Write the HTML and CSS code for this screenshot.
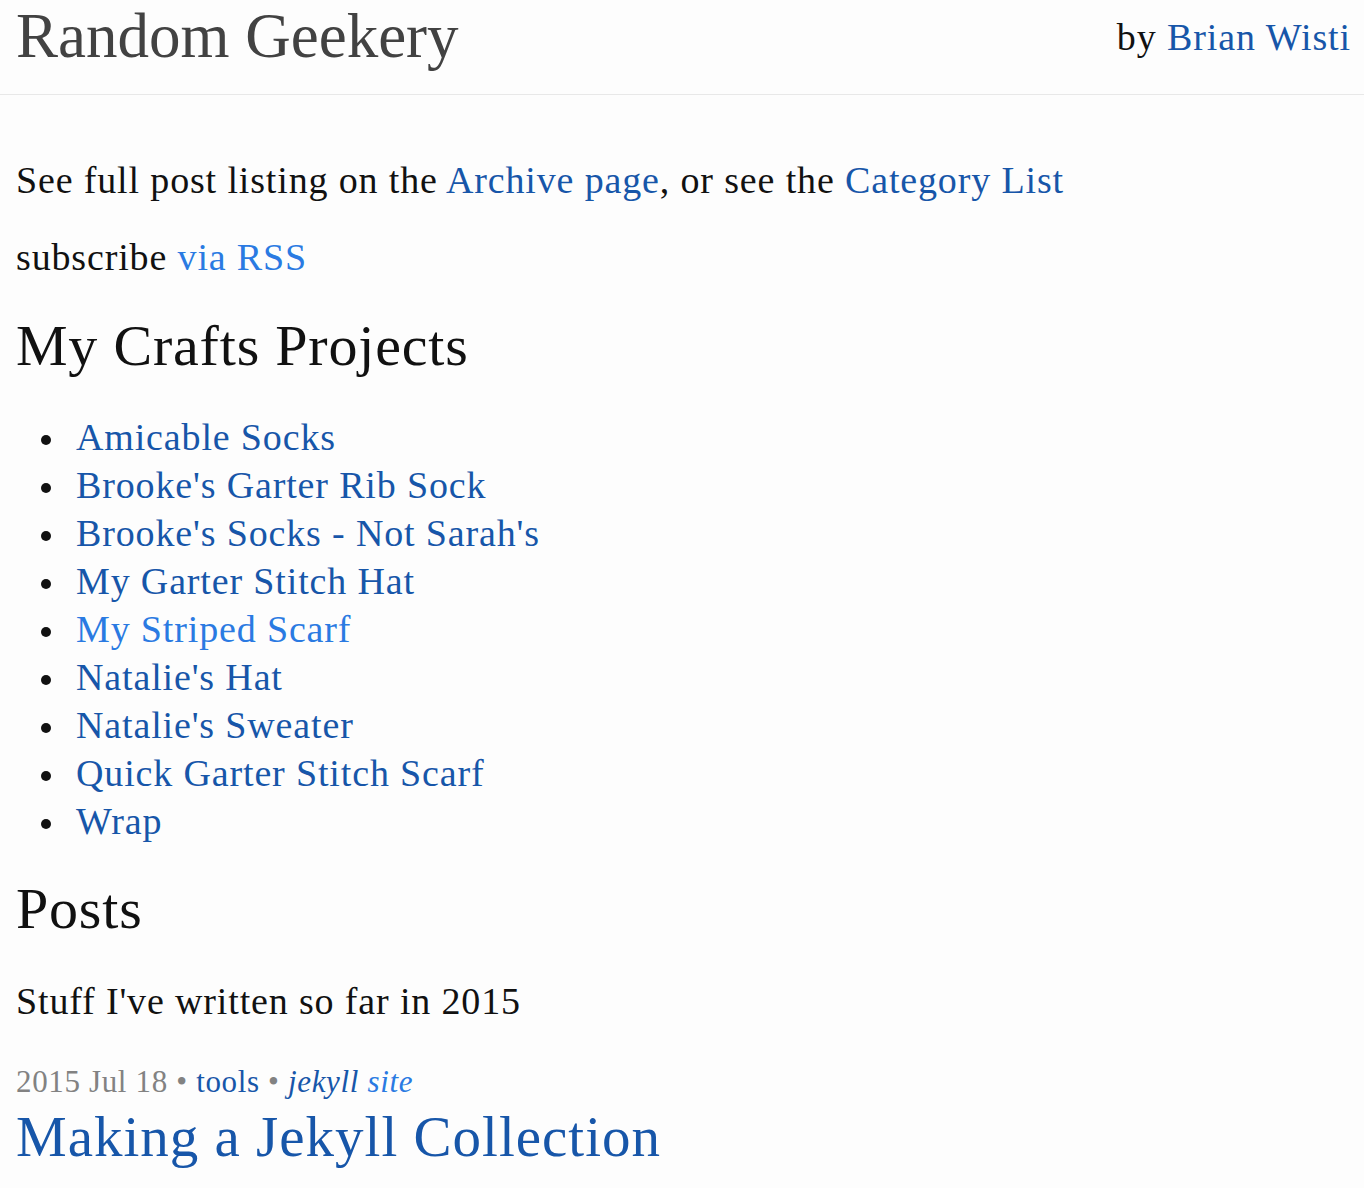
FILE: index.html
```html
<!DOCTYPE html>
<html lang="en">
<head>
<meta charset="utf-8">
<title>Random Geekery</title>
<link rel="stylesheet" href="styles.css">
</head>
<body>
<header class="site-header">
  <div class="header-inner">
    <a class="site-title" href="#">Random Geekery</a>
    <div class="byline">by <a class="link" href="#">Brian Wisti</a></div>
  </div>
</header>
<main class="page-content">
  <p class="intro">See full post listing on the <a class="link" href="#">Archive page</a>, or see the <a class="link" href="#">Category List</a></p>
  <p class="subscribe">subscribe <a class="link-light" href="#">via RSS</a></p>
  <h2 class="section-title crafts">My Crafts Projects</h2>
  <ul class="project-list">
    <li><a class="link" href="#">Amicable Socks</a></li>
    <li><a class="link" href="#">Brooke's Garter Rib Sock</a></li>
    <li><a class="link" href="#">Brooke's Socks - Not Sarah's</a></li>
    <li><a class="link" href="#">My Garter Stitch Hat</a></li>
    <li><a class="link-light" href="#">My Striped Scarf</a></li>
    <li><a class="link" href="#">Natalie's Hat</a></li>
    <li><a class="link" href="#">Natalie's Sweater</a></li>
    <li><a class="link" href="#">Quick Garter Stitch Scarf</a></li>
    <li><a class="link" href="#">Wrap</a></li>
  </ul>
  <h2 class="section-title posts">Posts</h2>
  <p class="posts-intro">Stuff I've written so far in 2015</p>
  <div class="post-meta">2015 Jul 18 • <a class="link" href="#">tools</a> • <em class="tags"><a class="link" href="#">jekyll</a> <a class="link-light" href="#">site</a></em></div>
  <h3 class="post-title"><a class="link" href="#">Making a Jekyll Collection</a></h3>
</main>
</body>
</html>
```
FILE: styles.css
```css
html, body {
  margin: 0;
  padding: 0;
  background: #fdfdfd;
}
body {
  font-family: "Liberation Serif", "Times New Roman", serif;
  color: #111111;
  font-size: 38px;
  line-height: 48px;
  letter-spacing: 0.85px;
}
a {
  text-decoration: none;
}
.link {
  color: #1756a9;
}
.link-light {
  color: #2a7ae2;
}
.site-header {
  border-bottom: 1px solid #e8e8e8;
}
.header-inner {
  display: flex;
  justify-content: space-between;
  align-items: flex-start;
  height: 88px;
  padding: 6px 13px 0 16px;
}
.site-title {
  font-size: 63px;
  line-height: 60px;
  letter-spacing: 0;
  color: #424242;
}
.byline {
  font-size: 38px;
  line-height: 62px;
  letter-spacing: 0.9px;
}
.page-content {
  padding: 61px 16px 0;
}
p {
  margin: 0;
}
.subscribe {
  margin-top: 29px;
}
.section-title {
  font-weight: normal;
  font-size: 58px;
  line-height: 68px;
  letter-spacing: 0.8px;
  margin: 0;
}
.crafts {
  margin-top: 31px;
}
.project-list {
  list-style: none;
  margin: 33px 0 0;
  padding-left: 60px;
}
.project-list li::before {
  content: "";
  display: inline-block;
  width: 10px;
  height: 10px;
  border-radius: 50%;
  background: #111111;
  margin-left: -35px;
  margin-right: 25px;
  vertical-align: 5px;
}
.posts {
  margin-top: 30px;
}
.posts-intro {
  margin-top: 34px;
}
.post-meta {
  margin-top: 37px;
  font-size: 31px;
  line-height: 40px;
  letter-spacing: 0.65px;
  color: #828282;
}
.tags {
  font-style: italic;
}
.post-title {
  margin: 3px 0 0;
  font-weight: normal;
  font-size: 57px;
  line-height: 64px;
  letter-spacing: 1px;
}
```
